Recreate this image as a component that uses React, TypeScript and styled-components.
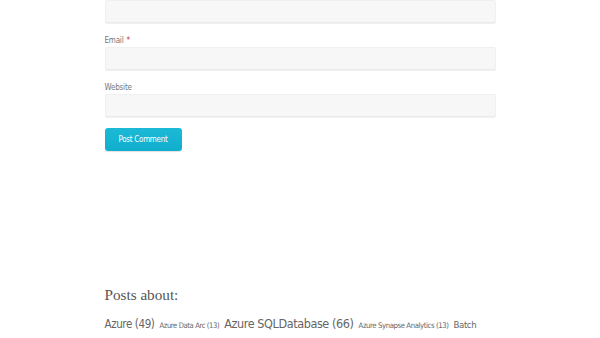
import React from 'react';
import styled, { createGlobalStyle } from 'styled-components';

const SANS = "'DejaVu Sans Condensed', 'Noto Sans', 'Liberation Sans', sans-serif";

const Global = createGlobalStyle`
  html, body {
    margin: 0;
    padding: 0;
    background: #fff;
  }
  body {
    font-family: ${SANS};
    color: #666;
    overflow: hidden;
  }
`;

const Column = styled.div`
  width: 391px;
  margin: 0 auto;
`;

const Form = styled.form`
  display: flex;
  flex-direction: column;
`;

const Field = styled.div<{ $first?: boolean }>`
  display: flex;
  flex-direction: column;
  margin-top: ${p => (p.$first ? 0 : 10)}px;
`;

const Label = styled.label`
  font-size: 8px;
  line-height: 13px;
  letter-spacing: -0.2px;
  color: #777;
`;

const Required = styled.span`
  color: #c0392b;
  margin-left: 3px;
`;

const Input = styled.input`
  box-sizing: border-box;
  height: 24px;
  width: 100%;
  border: 1px solid #f0f0f0;
  border-radius: 2px;
  background: #f7f7f7;
  box-shadow: inset 0 -1px 1px rgba(0, 0, 0, 0.05);
  outline: none;
  padding: 0 8px;
`;

const Submit = styled.button`
  align-self: flex-start;
  margin-top: 10px;
  width: 77px;
  height: 23px;
  border: none;
  border-radius: 3px;
  background: linear-gradient(#1cbad6, #10aecd);
  box-shadow: 0 1px 1px rgba(0, 0, 0, 0.12);
  color: #fff;
  font-family: ${SANS};
  font-size: 8px;
  letter-spacing: -0.3px;
  cursor: pointer;
`;

const Posts = styled.section`
  margin-top: 134px;
`;

const Heading = styled.h3`
  margin: 0;
  font-family: 'Liberation Serif', serif;
  font-weight: normal;
  font-size: 15.2px;
  line-height: 20px;
  color: #555;
`;

const Tags = styled.div`
  margin-top: 11px;
  display: flex;
  align-items: baseline;
  gap: 5px;
  white-space: nowrap;
`;

const Tag = styled.a<{ $size: number }>`
  font-size: ${p => p.$size}px;
  letter-spacing: -0.4px;
  color: #666;
  text-decoration: none;
`;

const tags = [
  { name: 'Azure', count: 49, size: 11.5 },
  { name: 'Azure Data Arc', count: 13, size: 7.6 },
  { name: 'Azure SQLDatabase', count: 66, size: 12.5 },
  { name: 'Azure Synapse Analytics', count: 13, size: 7.7 },
  { name: 'Batch', size: 9.5 },
];

export default function App() {
  return (
    <>
      <Global />
      <Column>
        <Form onSubmit={e => e.preventDefault()}>
          <Field $first>
            <Input type="text" />
          </Field>
          <Field>
            <Label>
              Email<Required>*</Required>
            </Label>
            <Input type="email" />
          </Field>
          <Field>
            <Label>Website</Label>
            <Input type="url" />
          </Field>
          <Submit type="submit">Post Comment</Submit>
        </Form>
        <Posts>
          <Heading>Posts about:</Heading>
          <Tags>
            {tags.map(t => (
              <Tag key={t.name} href="#" $size={t.size}>
                {t.count !== undefined ? `${t.name} (${t.count})` : t.name}
              </Tag>
            ))}
          </Tags>
        </Posts>
      </Column>
    </>
  );
}
